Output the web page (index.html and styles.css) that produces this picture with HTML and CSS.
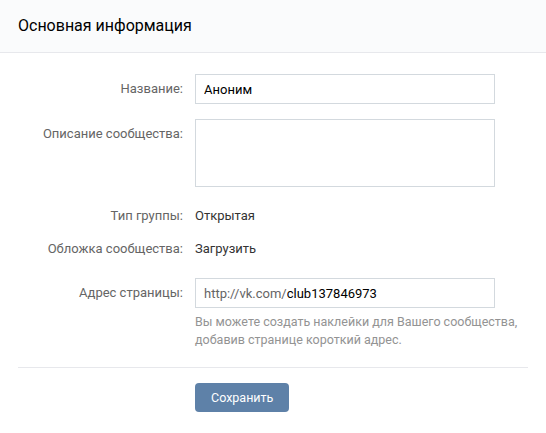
FILE: index.html
```html
<!DOCTYPE html>
<html lang="ru">
<head>
<meta charset="utf-8">
<title>Основная информация</title>
<link rel="stylesheet" href="styles.css">
</head>
<body>
<div class="page">
  <div class="header">Основная информация</div>
  <div class="content">
    <div class="row row-field row-first">
      <div class="label">Название:</div>
      <div class="control"><input class="input" type="text" value="Аноним"></div>
    </div>
    <div class="row row-field row-desc">
      <div class="label">Описание сообщества:</div>
      <div class="control"><textarea class="textarea"></textarea></div>
    </div>
    <div class="row row-text row-type">
      <div class="label">Тип группы:</div>
      <div class="value">Открытая</div>
    </div>
    <div class="row row-text">
      <div class="label">Обложка сообщества:</div>
      <div class="value">Загрузить</div>
    </div>
    <div class="row row-field row-address">
      <div class="label">Адрес страницы:</div>
      <div class="control">
        <div class="input input-prefixed"><span class="prefix">http://vk.com/</span><input class="bare" type="text" value="club137846973"></div>
        <div class="hint">Вы можете создать наклейки для Вашего сообщества,<br>добавив странице короткий адрес.</div>
      </div>
    </div>
    <div class="footer">
      <div class="row">
        <div class="label"></div>
        <div class="control"><button class="button" type="button">Сохранить</button></div>
      </div>
    </div>
  </div>
</div>
</body>
</html>
```
FILE: styles.css
```css
html, body {
  margin: 0;
  padding: 0;
  background: #fff;
}
body {
  font-family: Roboto, "Open Sans", "Liberation Sans", sans-serif;
  font-size: 13px;
  color: #000;
}
.page {
  width: 546px;
}
.header {
  height: 52px;
  line-height: 52px;
  padding-left: 18px;
  background: #fafbfc;
  border-bottom: 1px solid #e7e8ec;
  font-size: 16px;
  color: #000;
}
.content {
  padding: 0 18px 21px;
}
.row {
  display: grid;
  grid-template-columns: 165px 1fr;
  column-gap: 12px;
}
.label {
  text-align: right;
  color: #656565;
  white-space: nowrap;
}
.row-field .label {
  line-height: 30px;
}
.row-text .label,
.row-text .value {
  line-height: 33px;
}
.value {
  color: #333;
}
.row-first { margin-top: 21px; }
.row-desc { margin-top: 15px; }
.row-type { margin-top: 12px; }
.row-address { margin-top: 13px; }
.input {
  box-sizing: border-box;
  display: block;
  width: 300px;
  height: 30px;
  margin: 0;
  padding: 0 8px;
  border: 1px solid #d3d9de;
  border-radius: 0;
  background: #fff;
  font: inherit;
  color: #000;
  outline: none;
}
.textarea {
  box-sizing: border-box;
  display: block;
  width: 300px;
  height: 68px;
  margin: 0;
  padding: 6px 8px;
  border: 1px solid #d3d9de;
  background: #fff;
  font: inherit;
  resize: none;
  outline: none;
}
.input-prefixed {
  display: flex;
  align-items: center;
}
.prefix {
  color: #656565;
}
.bare {
  flex: 1;
  min-width: 0;
  border: 0;
  padding: 0;
  margin: 0;
  font: inherit;
  color: #000;
  background: transparent;
  outline: none;
}
.hint {
  margin-top: 5px;
  font-size: 12.5px;
  line-height: 18px;
  color: #939393;
  white-space: nowrap;
}
.footer {
  margin-top: 18px;
  padding-top: 15px;
  border-top: 1px solid #e7e8ec;
}
.button {
  display: inline-block;
  margin: 0;
  padding: 7px 16px;
  border: 0;
  border-radius: 4px;
  background: #5e81a8;
  color: #fff;
  font-family: inherit;
  font-size: 12.5px;
  line-height: 15px;
  cursor: pointer;
}
```
